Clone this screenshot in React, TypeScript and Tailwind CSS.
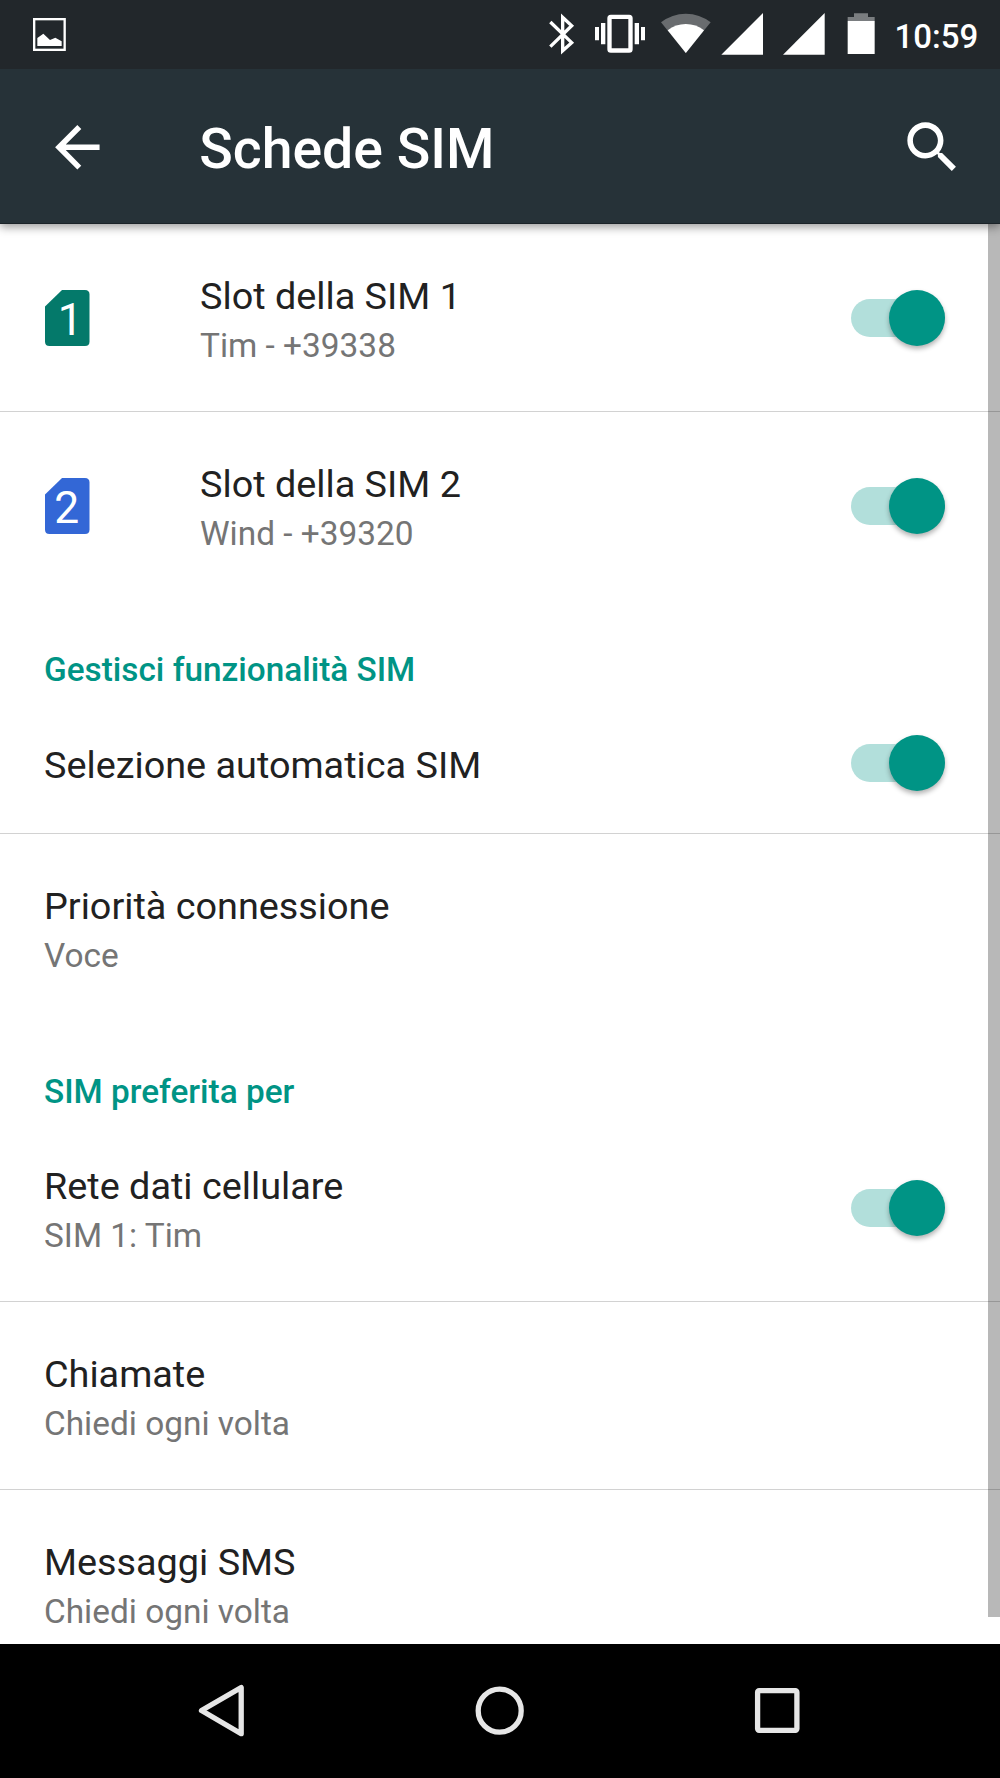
import { useState } from 'react';

type Item = {
    title: string;
    summary?: string;
    sim?: 1 | 2;
    toggle?: boolean;
};

type Section = { header?: string; items: Item[] };

const SECTIONS: Section[] = [
    {
        items: [
            { title: 'Slot della SIM 1', summary: 'Tim - +39338', sim: 1, toggle: true },
            { title: 'Slot della SIM 2', summary: 'Wind - +39320', sim: 2, toggle: true },
        ],
    },
    {
        header: 'Gestisci funzionalità SIM',
        items: [
            { title: 'Selezione automatica SIM', toggle: true },
            { title: 'Priorità connessione', summary: 'Voce' },
        ],
    },
    {
        header: 'SIM preferita per',
        items: [
            { title: 'Rete dati cellulare', summary: 'SIM 1: Tim', toggle: true },
            { title: 'Chiamate', summary: 'Chiedi ogni volta' },
            { title: 'Messaggi SMS', summary: 'Chiedi ogni volta' },
        ],
    },
];

function StatusBar() {
    return (
        <div className="relative z-20 h-[69px] shrink-0 bg-[#22272b] flex items-start text-white">
            <svg className="mt-[18px] ml-[33px] w-[33px] h-[33px]" viewBox="99 54 99 99" fill="none">
                <rect x="102.5" y="57.5" width="91.5" height="92" stroke="currentColor" strokeWidth="7" />
                <path d="M112 138v-24l18-13 20 19 16-7 19 11v14z" fill="currentColor" />
            </svg>

            {/* bluetooth */}
            <svg className="ml-[482px] mt-[0.4px] w-[28px] h-[69px]" viewBox="54 0 84 207" fill="none" stroke="currentColor" strokeWidth="10">
                <path d="M61 66l64 62-27 24V52l27 25-64 63" />
            </svg>
            {/* vibrate */}
            <svg className="ml-[18px] w-[52px] h-[69px]" viewBox="192 0 156 207" fill="currentColor">
                <rect x="238.5" y="50.5" width="63" height="101" rx="4" fill="none" stroke="currentColor" strokeWidth="13" />
                <path d="M195 81h12v40h-12zM213 69h13v64h-13zM314 69h13v64h-13zM333 81h12v40h-12z" />
            </svg>
            {/* wifi */}
            <svg className="ml-[14.3px] w-[52px] h-[69px]" viewBox="391 0 156 207" fill="currentColor">
                <path d="M468.5 159L394 67Q427 41 468.5 41T543 67z" fill="#696c6f" />
                <path d="M468.5 159L414 91Q438 72 468.5 72T523 91z" />
            </svg>
            {/* signal, one per SIM */}
            <svg className="ml-[9px] w-[42px] h-[69px]" viewBox="574 0 126 207" fill="currentColor">
                <path d="M575 164h125V39z" />
            </svg>
            <svg className="ml-[19.4px] w-[42px] h-[69px]" viewBox="68 0 126 207" fill="currentColor">
                <path d="M68 164h125V39z" />
            </svg>
            {/* battery */}
            <svg className="ml-[22.3px] w-[28px] h-[69px]" viewBox="261 0 84 207" fill="currentColor">
                <path d="M263 63V51h19V40h42v11h20v12z" fill="#7a7d80" />
                <path d="M263 63h81v99h-81z" />
            </svg>
            <span className="ml-[19.5px] mt-[17px] text-[33px] leading-[40px] font-medium">10:59</span>
        </div>
    );
}

function AppBar() {
    return (
        <header className="relative z-10 h-[155px] shrink-0 bg-[#263238] border-b border-[#1b2328] flex items-center text-white shadow-[0_3px_9px_rgba(0,0,0,0.4)]">
            <svg className="ml-[43.5px] mt-[2px] w-[66.7px] h-[66.7px]" viewBox="0 0 24 24" fill="currentColor">
                <path d="M20 11H7.83l5.59-5.59L12 4l-8 8 8 8 1.41-1.41L7.83 13H20v-2z" />
            </svg>
            <h1 className="ml-[89px] mt-[8px] flex-1 text-[55.4px] leading-[66px] font-medium">Schede SIM</h1>
            <svg className="mr-[34px] mt-[2px] w-[66.7px] h-[66.7px]" viewBox="0 0 24 24" fill="currentColor">
                <path d="M15.5 14h-.79l-.28-.27C15.41 12.59 16 11.11 16 9.5 16 5.91 13.09 3 9.5 3S3 5.91 3 9.5 5.91 16 9.5 16c1.61 0 3.09-.59 4.23-1.57l.27.28v.79l5 4.99L20.49 19l-4.99-5zm-6 0C7.01 14 5 11.99 5 9.5S7.01 5 9.5 5 14 7.01 14 9.5 11.99 14 9.5 14z" />
            </svg>
        </header>
    );
}

function SimIcon({ slot }: { slot: 1 | 2 }) {
    return (
        <svg className="w-[45px] h-[56px] shrink-0" viewBox="0 0 45 56">
            <path
                d="M17 0H40Q44.5 0 44.5 4.5V51.5Q44.5 56 40 56H4.5Q0 56 0 51.5V16.5z"
                fill={slot === 1 ? '#04796a' : '#3367d6'}
            />
            <text x={slot === 1 ? 12.8 : 9.3} y="44.7" fontSize="44.4" fill="#fff">
                {slot}
            </text>
        </svg>
    );
}

function Switch() {
    const [on, setOn] = useState(true);
    return (
        <button
            role="switch"
            aria-checked={on}
            onClick={() => setOn(!on)}
            className="mr-[55px] w-[94px] h-[56px] shrink-0 flex items-center"
        >
            <span className={`w-[94px] h-[38px] shrink-0 rounded-full flex items-center ${on ? 'justify-end bg-[#b2dfdb]' : 'justify-start bg-gray-300'}`}>
                <span className={`size-[56px] shrink-0 rounded-full shadow-[0_3px_5px_rgba(0,0,0,0.3)] ${on ? 'bg-[#009485]' : 'bg-gray-50'}`} />
            </span>
        </button>
    );
}

function Row({ item, divider }: { item: Item; divider: boolean }) {
    return (
        <div
            className={`pl-[45px] shrink-0 flex items-center border-b ${item.summary ? 'h-[188px]' : 'h-[142px]'} ${
                divider ? 'border-[#d2d2d2]' : 'border-transparent'
            }`}
        >
            {item.sim && (
                <div className="w-[156px] shrink-0">
                    <SimIcon slot={item.sim} />
                </div>
            )}
            <div className="flex-1 -ml-px pt-[4px]">
                <div className="text-[37.8px] leading-[46px] text-[#212121]">{item.title}</div>
                {item.summary && <div className="mt-[7px] text-[33.4px] leading-[40px] text-[#757575]">{item.summary}</div>}
            </div>
            {item.toggle && <Switch />}
        </div>
    );
}

function NavBar() {
    return (
        <nav className="h-[134px] shrink-0 bg-black">
            <svg className="w-full h-full" viewBox="0 1644 1000 134" fill="none" stroke="#e6e6e6" strokeWidth="5.3" strokeLinejoin="round">
                <path d="M201.5 1710.5L241.2 1687.5V1733.7z" />
                <circle cx="499.7" cy="1710.7" r="21.5" />
                <rect x="757.6" y="1690.7" width="39.3" height="39.6" rx="1.5" />
            </svg>
        </nav>
    );
}

export default function App() {
    return (
        <div className="w-[1000px] h-[1778px] flex flex-col overflow-hidden bg-white font-['Roboto',sans-serif]">
            <StatusBar />
            <AppBar />
            <main className="relative flex-1 min-h-0 overflow-hidden flex flex-col">
                {SECTIONS.map((section, i) => (
                    <section key={i} className="shrink-0 flex flex-col">
                        {section.header && (
                            <h2 className="h-[92px] pl-[44px] pt-[50px] text-[33.35px] leading-[40px] font-medium text-[#009485]">
                                {section.header}
                            </h2>
                        )}
                        {section.items.map((item, j) => (
                            <Row key={item.title} item={item} divider={j < section.items.length - 1} />
                        ))}
                    </section>
                ))}
                {/* scroll thumb */}
                <div className="absolute right-0 top-0 w-[11.7px] h-[1393px] bg-black/28" />
            </main>
            <NavBar />
        </div>
    );
}
